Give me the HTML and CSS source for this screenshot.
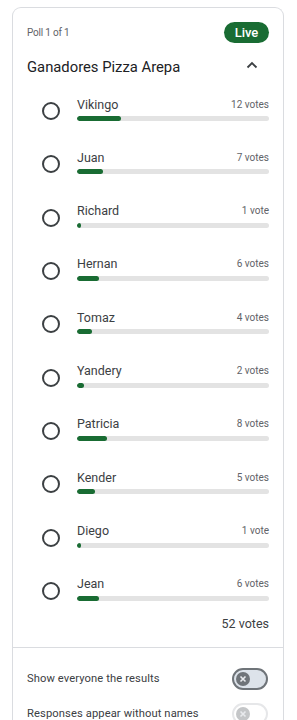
FILE: index.html
```html
<!DOCTYPE html>
<html>
<head>
<meta charset="utf-8">
<link rel="stylesheet" href="styles.css">
</head>
<body>
<div class="card">
  <div class="head">
    <div class="meta-row">
      <span class="poll-count">Poll 1 of 1</span>
      <span class="live">Live</span>
    </div>
    <div class="title-row">
      <span class="title">Ganadores Pizza Arepa</span>
      <svg class="chev" width="14" height="10" viewBox="0 0 14 10"><path d="M2.5 7.5 L7 3 L11.5 7.5" fill="none" stroke="#3c4043" stroke-width="1.8"/></svg>
    </div>
  </div>
  <div class="options">
    <div class="option"><span class="radio"></span><div class="content"><div class="line"><span class="label">Vikingo</span><span class="votes">12 votes</span></div><div class="bar"><div class="fill" style="width:23.08%"></div></div></div></div>
    <div class="option"><span class="radio"></span><div class="content"><div class="line"><span class="label">Juan</span><span class="votes">7 votes</span></div><div class="bar"><div class="fill" style="width:13.46%"></div></div></div></div>
    <div class="option"><span class="radio"></span><div class="content"><div class="line"><span class="label">Richard</span><span class="votes">1 vote</span></div><div class="bar"><div class="fill" style="width:1.92%"></div></div></div></div>
    <div class="option"><span class="radio"></span><div class="content"><div class="line"><span class="label">Hernan</span><span class="votes">6 votes</span></div><div class="bar"><div class="fill" style="width:11.54%"></div></div></div></div>
    <div class="option"><span class="radio"></span><div class="content"><div class="line"><span class="label">Tomaz</span><span class="votes">4 votes</span></div><div class="bar"><div class="fill" style="width:7.69%"></div></div></div></div>
    <div class="option"><span class="radio"></span><div class="content"><div class="line"><span class="label">Yandery</span><span class="votes">2 votes</span></div><div class="bar"><div class="fill" style="width:3.85%"></div></div></div></div>
    <div class="option"><span class="radio"></span><div class="content"><div class="line"><span class="label">Patricia</span><span class="votes">8 votes</span></div><div class="bar"><div class="fill" style="width:15.38%"></div></div></div></div>
    <div class="option"><span class="radio"></span><div class="content"><div class="line"><span class="label">Kender</span><span class="votes">5 votes</span></div><div class="bar"><div class="fill" style="width:9.62%"></div></div></div></div>
    <div class="option"><span class="radio"></span><div class="content"><div class="line"><span class="label">Diego</span><span class="votes">1 vote</span></div><div class="bar"><div class="fill" style="width:1.92%"></div></div></div></div>
    <div class="option"><span class="radio"></span><div class="content"><div class="line"><span class="label">Jean</span><span class="votes">6 votes</span></div><div class="bar"><div class="fill" style="width:11.54%"></div></div></div></div>
  </div>
  <div class="total">52 votes</div>
  <div class="settings">
    <div class="setting">
      <span class="setting-label">Show everyone the results</span>
      <span class="switch"><span class="thumb"><svg width="8" height="8" viewBox="0 0 8 8"><path d="M1.5 1.5 L6.5 6.5 M6.5 1.5 L1.5 6.5" stroke="#e8eaed" stroke-width="1.6"/></svg></span></span>
    </div>
    <div class="setting">
      <span class="setting-label">Responses appear without names</span>
      <span class="switch disabled"><span class="thumb"><svg width="8" height="8" viewBox="0 0 8 8"><path d="M1.5 1.5 L6.5 6.5 M6.5 1.5 L1.5 6.5" stroke="#e8eaed" stroke-width="1.6"/></svg></span></span>
    </div>
  </div>
</div>
</body>
</html>
```
FILE: styles.css
```css
html, body {
  margin: 0;
  padding: 0;
  background: #ffffff;
  height: 720px;
  overflow: hidden;
}
body {
  font-family: Roboto, "Noto Sans", sans-serif;
  color: #202124;
}
.card {
  margin: 7px 0 0 12px;
  width: 270px;
  border: 1px solid #dadce0;
  border-bottom: none;
  border-radius: 9px 9px 0 0;
  height: 720px;
}
.head {
  padding: 14px 14px 0 14px;
}
.meta-row {
  display: flex;
  justify-content: space-between;
  align-items: center;
  height: 21px;
}
.poll-count {
  font-size: 10px;
  color: #5f6368;
  letter-spacing: -0.2px;
}
.live {
  background: #196c33;
  color: #ffffff;
  font-size: 13px;
  font-weight: 500;
  width: 45px;
  height: 21px;
  line-height: 21px;
  text-align: center;
  border-radius: 11px;
}
.title-row {
  display: flex;
  justify-content: space-between;
  align-items: center;
  margin-top: 12px;
  height: 24px;
}
.title {
  font-size: 14.8px;
  color: #202124;
}
.chev {
  margin-right: 10px;
  margin-top: -4px;
}
.options {
  display: flex;
  flex-direction: column;
  gap: 28.33px;
  margin-top: 17px;
  padding: 0 14px 0 29px;
}
.option {
  display: flex;
  align-items: flex-start;
  gap: 17px;
}
.radio {
  width: 14px;
  height: 14px;
  border: 2px solid #3c4043;
  border-radius: 50%;
  margin-top: 6px;
  flex: none;
}
.content {
  flex: 1;
}
.line {
  display: flex;
  justify-content: space-between;
  align-items: center;
  height: 16px;
}
.label {
  font-size: 12.5px;
  color: #3c4043;
}
.votes {
  font-size: 10px;
  color: #5f6368;
}
.bar {
  margin-top: 4px;
  height: 5px;
  background: #e3e3e3;
  border-radius: 3px;
  overflow: hidden;
}
.fill {
  height: 100%;
  background: #196c33;
  border-radius: 3px;
  min-width: 3px;
}
.total {
  margin-top: 15px;
  padding: 0 14px;
  text-align: right;
  font-size: 12.5px;
  line-height: 16px;
  color: #3c4043;
  padding-bottom: 15px;
  border-bottom: 1px solid #dadce0;
}
.settings {
  padding: 20px 14px 0 14px;
  display: flex;
  flex-direction: column;
  gap: 13px;
}
.setting {
  display: flex;
  justify-content: space-between;
  align-items: center;
  height: 22px;
}
.setting-label {
  font-size: 11.2px;
  color: #3c4043;
  letter-spacing: 0.1px;
}
.switch {
  box-sizing: border-box;
  width: 36px;
  height: 22px;
  border: 2px solid #6f7479;
  background: #dde3ea;
  border-radius: 11px;
  display: flex;
  align-items: center;
  padding-left: 2px;
  margin-right: 1px;
}
.thumb {
  width: 14px;
  height: 14px;
  border-radius: 50%;
  background: #6f7479;
  display: flex;
  align-items: center;
  justify-content: center;
}
.switch.disabled {
  border-color: #e6e7e9;
  background: #ffffff;
}
.switch.disabled .thumb {
  background: #c4c6c8;
}
```
